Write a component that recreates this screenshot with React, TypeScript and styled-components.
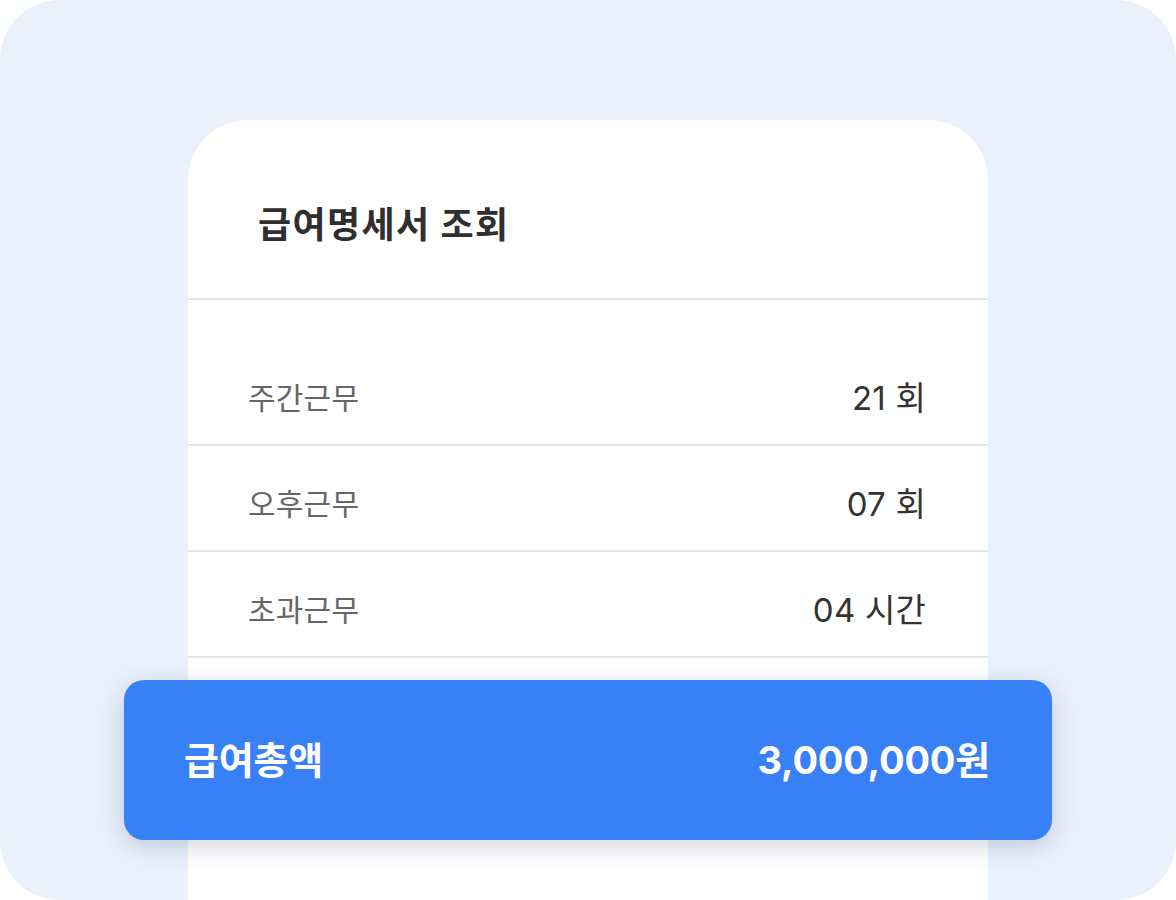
import React from "react";
import styled, { createGlobalStyle } from "styled-components";

const Global = createGlobalStyle`
  html, body { margin: 0; padding: 0; background: #ffffff; }
  * { box-sizing: border-box; }
`;

const FONT = `"Inter", "Noto Sans CJK KR", "Noto Sans", sans-serif`;

const Stage = styled.div`
  width: 1176px;
  height: 900px;
  border-radius: 60px;
  background: #eaf1fd;
  overflow: hidden;
  padding-top: 120px;
  display: flex;
  justify-content: center;
  font-family: ${FONT};
`;

const Card = styled.section`
  width: 800px;
  background: #ffffff;
  border-radius: 60px 60px 0 0;
  display: flex;
  flex-direction: column;
`;

const Header = styled.header`
  height: 180px;
  padding: 84px 70px 0;
  border-bottom: 2px solid #e4e4e4;
`;

const Title = styled.h1`
  margin: 0;
  font-size: 36px;
  line-height: 42px;
  font-weight: 700;
  color: #2f2f2f;
  letter-spacing: 1.4px;
`;

const List = styled.ul`
  list-style: none;
  margin: 0;
  padding: 40px 0 0;
`;

const Row = styled.li`
  display: flex;
  justify-content: space-between;
  align-items: center;
  height: 106px;
  padding: 40px 62px 28px 60px;
  border-bottom: 2px solid #e4e4e4;
`;

const Label = styled.span`
  font-size: 30px;
  line-height: 36px;
  color: #666666;
  letter-spacing: 0.2px;
`;

const Value = styled.span`
  font-size: 33px;
  line-height: 36px;
  color: #333333;
  letter-spacing: 0.2px;
`;

const TotalBar = styled.div`
  margin: 22px -64px 0;
  height: 160px;
  border-radius: 20px;
  background: #3880f6;
  box-shadow: 0 6px 24px rgba(40, 60, 100, 0.22);
  display: flex;
  justify-content: space-between;
  align-items: center;
  padding: 0 62px 0 60px;
  position: relative;
  z-index: 1;
`;

const TotalText = styled.span`
  font-size: 38px;
  line-height: 44px;
  font-weight: 700;
  color: #ffffff;
  letter-spacing: -0.2px;
`;

const rows = [
  { label: "주간근무", value: "21 회" },
  { label: "오후근무", value: "07 회" },
  { label: "초과근무", value: "04 시간" },
];

export default function App() {
  return (
    <>
      <Global />
      <Stage>
        <Card>
          <Header>
            <Title>급여명세서 조회</Title>
          </Header>
          <List>
            {rows.map((r) => (
              <Row key={r.label}>
                <Label>{r.label}</Label>
                <Value>{r.value}</Value>
              </Row>
            ))}
          </List>
          <TotalBar>
            <TotalText>급여총액</TotalText>
            <TotalText>3,000,000원</TotalText>
          </TotalBar>
        </Card>
      </Stage>
    </>
  );
}
